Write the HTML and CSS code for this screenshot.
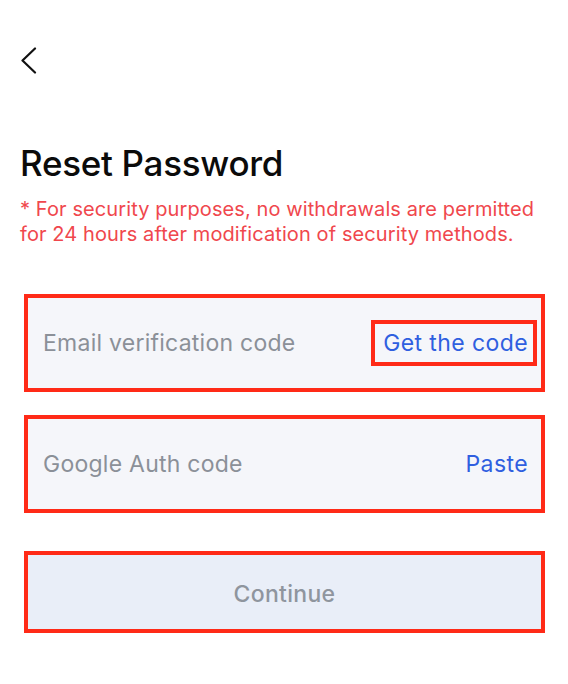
FILE: index.html
```html
<!DOCTYPE html>
<html lang="en">
<head>
<meta charset="utf-8">
<title>Reset Password</title>
<link rel="stylesheet" href="styles.css">
</head>
<body>
<div class="page">
  <header class="topbar">
    <button class="back" aria-label="Back">
      <svg width="18" height="28" viewBox="0 0 18 28"><path d="M15 1.5 L2.5 13.5 L15 25.5" fill="none" stroke="#111" stroke-width="2.2" stroke-linecap="round" stroke-linejoin="round"/></svg>
    </button>
  </header>
  <h1 class="title">Reset Password</h1>
  <p class="notice">* For security purposes, no withdrawals are permitted for 24 hours after modification of security methods.</p>
  <div class="form">
    <div class="field">
      <span class="placeholder">Email verification code</span>
      <span class="action action-boxed">Get the code</span>
    </div>
    <div class="field">
      <span class="placeholder">Google Auth code</span>
      <span class="action">Paste</span>
    </div>
    <div class="submit">Continue</div>
  </div>
</div>
</body>
</html>
```

FILE: styles.css
```css
* { box-sizing: border-box; }
html, body { margin: 0; padding: 0; background: #ffffff; }
body { font-family: Inter, "Noto Sans", sans-serif; }
.page { width: 568px; height: 684px; padding: 0 0 0 20px; }
.topbar { height: 134px; padding-top: 47px; }
.back { background: none; border: 0; padding: 0; margin: 0; display: block; cursor: pointer; }
.back svg { display: block; }
.title { margin: 8px 0 0 0; font-size: 35px; line-height: 42px; font-weight: 500; color: #0b0b0b; letter-spacing: -0.3px; }
.notice { margin: 13px 0 0 0; width: 524px; font-size: 20px; line-height: 25px; color: #f0474d; letter-spacing: 0.1px; }
.form { margin: 47px 0 0 4px; width: 521px; display: flex; flex-direction: column; }
.field { height: 98px; border: 4px solid #ff2a17; background: #f5f6fa; display: flex; align-items: center; justify-content: space-between; padding: 0 13px 0 15px; }
.field + .field { margin-top: 23px; }
.placeholder { font-size: 23px; line-height: 30px; color: #8b9098; letter-spacing: 0.25px; }
.action { font-size: 23px; line-height: 30px; color: #2f5fe0; letter-spacing: 0.4px; }
.action-boxed { border: 4px solid #ff2a17; padding: 4px 5px 4px 8px; margin-right: -9px; }
.submit { margin-top: 38px; height: 82px; border: 4px solid #ff2a17; background: #e9eef8; display: flex; align-items: center; justify-content: center; font-size: 23px; line-height: 30px; color: #8f959e; font-weight: 500; letter-spacing: 0.3px; padding-top: 4px; }
```
